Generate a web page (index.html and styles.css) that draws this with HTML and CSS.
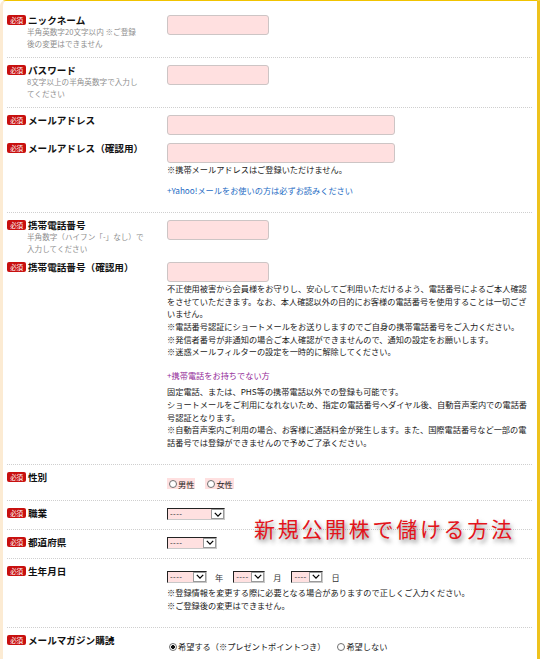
FILE: index.html
```html
<!DOCTYPE html>
<html lang="ja">
<head>
    <meta charset="UTF-8" />
    <meta name="viewport" content="width=device-width, initial-scale=1" />
    <title>会員登録</title>
    <link rel="stylesheet" href="styles.css">
</head>

<body>
    <div class="page">
        <form class="entry" action="#" onsubmit="return false;">

            <div class="row">
                <div class="field">
                    <div class="label"><span class="req">必須</span>ニックネーム
                        <span class="hint">半角英数字20文字以内 ※ご登録<br>後の変更はできません</span>
                    </div>
                    <div class="value"><input class="text short" type="text" name="nickname"></div>
                </div>
            </div>

            <div class="row">
                <div class="field">
                    <div class="label"><span class="req">必須</span>パスワード
                        <span class="hint">8文字以上の半角英数字で入力し<br>てください</span>
                    </div>
                    <div class="value"><input class="text short" type="password" name="password"></div>
                </div>
            </div>

            <div class="row">
                <div class="field">
                    <div class="label"><span class="req">必須</span>メールアドレス</div>
                    <div class="value"><input class="text long" type="text" name="mail"></div>
                </div>
                <div class="field">
                    <div class="label"><span class="req">必須</span>メールアドレス（確認用）</div>
                    <div class="value">
                        <input class="text long" type="text" name="mail_confirm">
                        <p class="note">※携帯メールアドレスはご登録いただけません。</p>
                        <a class="more" href="#">+Yahoo!メールをお使いの方は必ずお読みください</a>
                    </div>
                </div>
            </div>

            <div class="row">
                <div class="field">
                    <div class="label"><span class="req">必須</span>携帯電話番号
                        <span class="hint">半角数字（ハイフン「-」なし）で<br>入力してください</span>
                    </div>
                    <div class="value"><input class="text short" type="text" name="tel"></div>
                </div>
                <div class="field">
                    <div class="label"><span class="req">必須</span>携帯電話番号（確認用）</div>
                    <div class="value">
                        <input class="text short" type="text" name="tel_confirm">
                        <p class="note">不正使用被害から会員様をお守りし、安心してご利用いただけるよう、電話番号によるご本人確認<br>をさせていただきます。なお、本人確認以外の目的にお客様の電話番号を使用することは一切ござ<br>いません。<br>※電話番号認証にショートメールをお送りしますのでご自身の携帯電話番号をご入力ください。<br>※発信者番号が非通知の場合ご本人確認ができませんので、通知の設定をお願いします。<br>※迷惑メールフィルターの設定を一時的に解除してください。</p>
                        <a class="more more-alt" href="#">+携帯電話をお持ちでない方</a>
                        <p class="note">固定電話、または、PHS等の携帯電話以外での登録も可能です。<br>ショートメールをご利用になれないため、指定の電話番号へダイヤル後、自動音声案内での電話番<br>号認証となります。<br>※自動音声案内ご利用の場合、お客様に通話料金が発生します。また、国際電話番号など一部の電<br>話番号では登録ができませんので予めご了承ください。</p>
                        <span class="spacer"></span>
                    </div>
                </div>
            </div>

            <div class="row">
                <div class="field">
                    <div class="label"><span class="req">必須</span>性別</div>
                    <div class="value choices">
                        <label class="opt tinted"><input type="radio" name="sex" value="m">男性</label>
                        <label class="opt tinted"><input type="radio" name="sex" value="f">女性</label>
                    </div>
                </div>
            </div>

            <div class="row">
                <div class="field">
                    <div class="label"><span class="req">必須</span>職業</div>
                    <div class="value">
                        <span class="pick pick-job">
                            <select name="job"><option>----</option></select>
                            <span class="pick-btn"><svg viewBox="0 0 10 6" width="8" height="5"><path d="M1 1l4 4 4-4" fill="none" stroke="#000" stroke-width="1.6"/></svg></span>
                        </span>
                    </div>
                </div>
            </div>

            <div class="row">
                <div class="field">
                    <div class="label"><span class="req">必須</span>都道府県</div>
                    <div class="value">
                        <span class="pick pick-pref">
                            <select name="pref"><option>----</option></select>
                            <span class="pick-btn"><svg viewBox="0 0 10 6" width="8" height="5"><path d="M1 1l4 4 4-4" fill="none" stroke="#000" stroke-width="1.6"/></svg></span>
                        </span>
                    </div>
                </div>
            </div>

            <div class="row">
                <div class="field">
                    <div class="label"><span class="req">必須</span>生年月日</div>
                    <div class="value">
                        <div class="birth">
                            <span class="pick pick-year">
                                <select name="year"><option>----</option></select>
                                <span class="pick-btn"><svg viewBox="0 0 10 6" width="8" height="5"><path d="M1 1l4 4 4-4" fill="none" stroke="#000" stroke-width="1.6"/></svg></span>
                            </span>
                            <span class="unit">年</span>
                            <span class="pick pick-day">
                                <select name="month"><option>----</option></select>
                                <span class="pick-btn"><svg viewBox="0 0 10 6" width="8" height="5"><path d="M1 1l4 4 4-4" fill="none" stroke="#000" stroke-width="1.6"/></svg></span>
                            </span>
                            <span class="unit">月</span>
                            <span class="pick pick-day">
                                <select name="day"><option>----</option></select>
                                <span class="pick-btn"><svg viewBox="0 0 10 6" width="8" height="5"><path d="M1 1l4 4 4-4" fill="none" stroke="#000" stroke-width="1.6"/></svg></span>
                            </span>
                            <span class="unit">日</span>
                        </div>
                        <p class="note">※登録情報を変更する際に必要となる場合がありますので正しくご入力ください。<br>※ご登録後の変更はできません。</p>
                        <span class="spacer"></span>
                    </div>
                </div>
            </div>

            <div class="row">
                <div class="field">
                    <div class="label"><span class="req">必須</span>メールマガジン購読</div>
                    <div class="value choices">
                        <label class="opt"><input type="radio" name="magazine" value="1" checked>希望する（※プレゼントポイントつき）</label>
                        <label class="opt"><input type="radio" name="magazine" value="0">希望しない</label>
                    </div>
                </div>
            </div>

        </form>
    </div>

    <div class="promo">新規公開株で儲ける方法</div>
</body>

</html>
```

FILE: styles.css
```css
* {
    box-sizing: border-box;
}

html,
body {
    margin: 0;
    height: 100%;
    background: #fff;
    font-family: "Noto Sans CJK JP", sans-serif;
    color: #333;
}

body {
    overflow: hidden;
}

.page {
    border-top: 1px solid #f1c300;
    border-left: 3px solid #fcebd3;
    border-right: 3px solid #eec21d;
    border-top-left-radius: 6px;
    background: #fff;
    min-height: 100%;
}

.entry {
    padding: 7px 5px 0 4px;
}

.row {
    padding: 7px 0 8px;
    border-bottom: 1px dotted #cfcfcf;
}

.field {
    display: grid;
    grid-template-columns: 160px 1fr;
}

.field + .field {
    margin-top: 8px;
}

/* left column: red badge + bold caption */
.label {
    font-size: 9.6px;
    line-height: 11px;
    font-weight: 700;
    color: #111;
    white-space: nowrap;
}

.req {
    display: inline-block;
    width: 19px;
    height: 10px;
    margin-right: 2px;
    border-radius: 2px;
    background: #c8100f;
    color: #fff;
    font-size: 6.5px;
    line-height: 10px;
    font-weight: 400;
    text-align: center;
    vertical-align: top;
    letter-spacing: -0.3px;
}

.hint {
    display: block;
    padding-left: 20px;
    font-size: 7.6px;
    line-height: 11.5px;
    font-weight: 400;
    color: #8f8f8f;
}

.value {
    font-size: 8.2px;
    line-height: 12.6px;
}

.text {
    display: block;
    height: 20px;
    border: 1px solid #cdc5c5;
    border-radius: 3px;
    background: #ffe0e0;
    outline: none;
}

.text.short {
    width: 102px;
}

.text.long {
    width: 228px;
}

.note {
    margin: 0;
    color: #1a1a1a;
    white-space: nowrap;
}

.more {
    display: block;
    margin: 8px 0;
    color: #1e6cc4;
    text-decoration: none;
}

.more-alt {
    margin: 11px 0 4px;
    color: #932a98;
}

.spacer {
    display: block;
    height: 8px;
}

/* radio groups */
.choices {
    display: flex;
    align-items: center;
    gap: 8px;
    margin: 6px 0 3px;
    color: #1a1a1a;
}

.opt {
    display: inline-flex;
    align-items: center;
    height: 11px;
}

.opt + .opt {
    margin-left: 2px;
}

.opt.tinted {
    background: #ffe0e0;
    padding-right: 1px;
}

.opt input {
    appearance: none;
    -webkit-appearance: none;
    width: 8px;
    height: 8px;
    margin: 1px 1px 0 2px;
    border: 1px solid #6f6f6f;
    border-radius: 50%;
    background: #fff;
}

.opt input:checked {
    background: radial-gradient(circle, #111 0 1.6px, #fff 2.2px);
}

/* dropdowns */
.pick {
    display: inline-flex;
    height: 12px;
    border: 1px solid;
    border-color: #222 #c8c8c8 #c8c8c8 #222;
    vertical-align: top;
}

.pick select {
    appearance: none;
    -webkit-appearance: none;
    height: 10px;
    margin: 0;
    padding: 0 2px;
    border: 0;
    border-radius: 0;
    background: #ffe0e0;
    font-family: "Liberation Sans", sans-serif;
    font-size: 8px;
    line-height: 10px;
    letter-spacing: 0.4px;
    color: #333;
    outline: none;
}

.pick-btn {
    display: flex;
    align-items: center;
    justify-content: center;
    width: 13px;
    height: 10px;
    border: 1px solid #9a9a9a;
    background: #fff;
}

.pick-job select {
    width: 43px;
}

.pick-pref select {
    width: 35px;
}

.pick-year select {
    width: 25px;
}

.pick-day select {
    width: 17px;
}

.birth {
    display: flex;
    align-items: center;
    margin: 5px 0 3px;
}

.unit {
    margin: 0 10px 0 8px;
    color: #333;
}

/* red banner text laid over the form */
.promo {
    position: absolute;
    left: 254px;
    top: 514px;
    font-family: "Noto Sans CJK JP", serif;
    font-size: 21px;
    font-weight: 400;
    letter-spacing: 2.7px;
    line-height: 28px;
    color: #e3141b;
    text-shadow: 2px 3px 4px rgba(60, 60, 60, 0.6), 0 0 2px #fff;
    white-space: nowrap;
}
```
